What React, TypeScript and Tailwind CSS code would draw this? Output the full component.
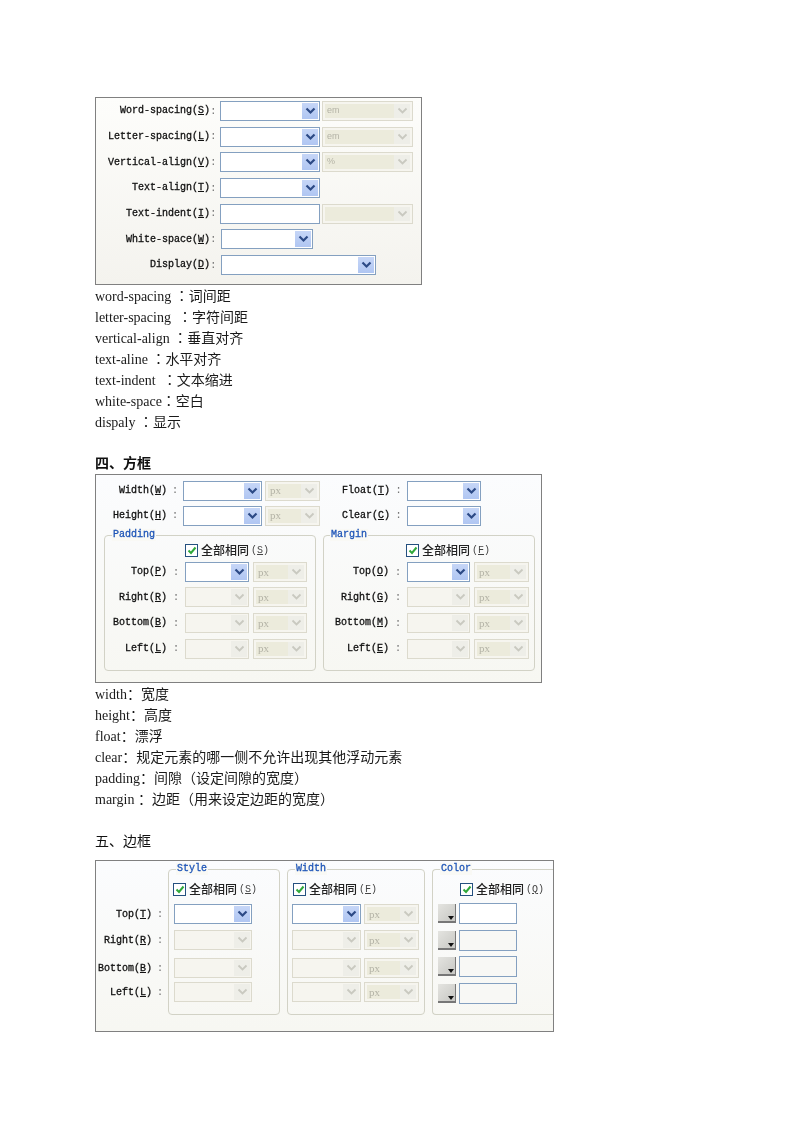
import React from "react";

const mono = "font-['Liberation_Mono','DejaVu_Sans_Mono',monospace]";

function Chevron({ off }: { off?: boolean }) {
  return (
    <svg width="11" height="8" viewBox="0 0 11 8" fill="none">
      <path d="M1.5 1.5 L5.5 5.5 L9.5 1.5" stroke={off ? "#c9c9c0" : "#2c4a86"} strokeWidth={off ? 1.8 : 2.2} />
    </svg>
  );
}

function Arrow({ off }: { off?: boolean }) {
  return (
    <div
      className={`flex h-full w-[16px] shrink-0 items-center justify-center ${
        off ? "bg-[#eeeee8]" : "bg-gradient-to-b from-[#c6d6f7] to-[#b0c6f2]"
      }`}
    >
      <Chevron off={off} />
    </div>
  );
}

function Select({ w, off }: { w: string; off?: boolean }) {
  return (
    <div
      className={`flex h-[20px] shrink-0 justify-end border p-px ${w} ${
        off ? "border-[#dcdacd] bg-[#f6f5ef]" : "border-[#84a0c0] bg-white"
      }`}
    >
      <Arrow off={off} />
    </div>
  );
}

function Unit({ w, text, sans }: { w: string; text?: string; sans?: boolean }) {
  return (
    <div className={`flex h-[20px] shrink-0 border border-[#dcdacd] bg-[#f6f5ef] p-[2px] ${w}`}>
      <div
        className={`flex flex-1 items-center bg-[#ecebdc] pl-[2px] text-[#b4b3a6] ${
          sans ? "font-['Liberation_Sans',sans-serif] text-[9px]" : "font-['Liberation_Serif',serif] text-[11px]"
        }`}
      >
        {text}
      </div>
      <Arrow off />
    </div>
  );
}

function Label({ name, k, w }: { name: string; k: string; w: string }) {
  return (
    <div className={`shrink-0 whitespace-nowrap text-right text-[10px] text-[#111] [-webkit-text-stroke:0.3px_#111] ${mono} ${w}`}>
      {name}(<span className="underline">{k}</span>)
    </div>
  );
}

function Colon({ w }: { w: string }) {
  return <div className={`shrink-0 text-center text-[11px] text-[#777] ${mono} ${w}`}>:</div>;
}

function Check({ k, cls }: { k: string; cls: string }) {
  return (
    <div className={`flex h-[14px] items-center ${cls}`}>
      <div className="flex h-[13px] w-[13px] items-center justify-center border border-[#24507f] bg-white">
        <svg width="10" height="9" viewBox="0 0 10 9" fill="none">
          <path d="M1.5 4.5 L4 7 L8.5 1.5" stroke="#2fa83a" strokeWidth="2" />
        </svg>
      </div>
      <span className="ml-[3px] whitespace-nowrap font-['Noto_Sans_CJK_SC',sans-serif] text-[12px] font-medium leading-none text-[#222]">
        全部相同
      </span>
      <span className={`ml-[2px] text-[10px] text-[#444] ${mono}`}>
        (<span className="underline">{k}</span>)
      </span>
    </div>
  );
}

function Legend({ text, cls }: { text: string; cls: string }) {
  return (
    <span
      className={`absolute top-[-7px] bg-[#f9f9f5] px-[1px] text-[10px] leading-[12px] text-[#1f56b8] [-webkit-text-stroke:0.3px_#1f56b8] ${mono} ${cls}`}
    >
      {text}
    </span>
  );
}

const rows1 = [
  { n: "Word-spacing", k: "S", s: "w-[100px]", u: "em", uw: "w-[91px]", ml: "ml-[5px]" },
  { n: "Letter-spacing", k: "L", s: "w-[100px]", u: "em", uw: "w-[91px]", ml: "ml-[5px]" },
  { n: "Vertical-align", k: "V", s: "w-[100px]", u: "%", uw: "w-[91px]", ml: "ml-[5px]" },
  { n: "Text-align", k: "T", s: "w-[100px]", ml: "ml-[5px]" },
  { n: "Text-indent", k: "I", s: "", input: true, u: "", uw: "w-[91px]", ml: "ml-[5px]" },
  { n: "White-space", k: "W", s: "w-[92px]", ml: "ml-[6px]" },
  { n: "Display", k: "D", s: "w-[155px]", ml: "ml-[6px]" },
];

function Panel1() {
  return (
    <div className="h-[188px] w-[327px] border border-[#808080] bg-gradient-to-b from-[#fdfdfb] to-[#f4f3ee]">
      {rows1.map((r) => (
        <div key={r.n} className="flex h-[25.7px] items-center">
          <Label name={r.n} k={r.k} w="w-[114px]" />
          <Colon w="w-[5px]" />
          <div className={`flex gap-[2px] ${r.ml}`}>
            {r.input ? (
              <div className="h-[20px] w-[100px] border border-[#84a0c0] bg-white" />
            ) : (
              <Select w={r.s} />
            )}
            {r.uw && <Unit w={r.uw} text={r.u} sans />}
          </div>
        </div>
      ))}
    </div>
  );
}

function BoxRow({ name, k, w1, w2, s, u, off }: { name: string; k: string; w1: string; w2: string; s: string; u: string; off?: boolean }) {
  return (
    <div className="flex h-[25.6px] items-center">
      <Label name={name} k={k} w={w1} />
      <Colon w={w2} />
      <div className="flex gap-[4px]">
        <Select w={s} off={off} />
        <Unit w={u} text="px" />
      </div>
    </div>
  );
}

function TopRow({ name, k, unit, w, c, s }: { name: string; k: string; unit?: boolean; w: string; c: string; s: string }) {
  return (
    <div className="flex h-[25px] items-center">
      <Label name={name} k={k} w={w} />
      <Colon w={c} />
      <div className="flex gap-[3px]">
        <Select w={s} />
        {unit && <Unit w="w-[55px]" text="px" />}
      </div>
    </div>
  );
}

function BoxGroup({ title, ck, labels, w1, w2, s, u, cls, lcls, ckcls }: {
  title: string; ck: string; labels: [string, string][]; w1: string; w2: string; s: string; u: string; cls: string; lcls: string; ckcls: string;
}) {
  return (
    <div className={`relative h-[136px] rounded-[4px] border border-[#d2d2c6] ${cls}`}>
      <Legend text={title} cls={lcls} />
      <Check k={ck} cls={`mt-[7px] ${ckcls}`} />
      <div className="mt-[2px]">
        {labels.map(([n, k], i) => (
          <BoxRow key={n} name={n} k={k} w1={w1} w2={w2} s={s} u={u} off={i > 0} />
        ))}
      </div>
    </div>
  );
}

function Panel2() {
  return (
    <div className="flex h-[209px] w-[447px] flex-col border border-[#808080] bg-gradient-to-b from-[#fbfcfe] to-[#f7f7f2]">
      <div className="mt-[3px] flex">
        <div className="w-[225px]">
          <TopRow name="Width" k="W" unit w="w-[71px]" c="w-[16px]" s="w-[79px]" />
          <TopRow name="Height" k="H" unit w="w-[71px]" c="w-[16px]" s="w-[79px]" />
        </div>
        <div>
          <TopRow name="Float" k="T" w="w-[69px]" c="w-[17px]" s="w-[74px]" />
          <TopRow name="Clear" k="C" w="w-[69px]" c="w-[17px]" s="w-[74px]" />
        </div>
      </div>
      <div className="ml-[8px] mt-[7px] flex gap-[7px]">
        <BoxGroup
          title="Padding" ck="S" cls="w-[212px]" lcls="left-[7px]" ckcls="ml-[80px]"
          labels={[["Top", "P"], ["Right", "R"], ["Bottom", "B"], ["Left", "L"]]}
          w1="w-[62px]" w2="w-[18px]" s="w-[64px]" u="w-[54px]"
        />
        <BoxGroup
          title="Margin" ck="F" cls="w-[212px]" lcls="left-[6px]" ckcls="ml-[82px]"
          labels={[["Top", "O"], ["Right", "G"], ["Bottom", "M"], ["Left", "E"]]}
          w1="w-[65px]" w2="w-[18px]" s="w-[63px]" u="w-[55px]"
        />
      </div>
    </div>
  );
}

const gaps = ["", "mt-[6px]", "mt-[8px]", "mt-[4px]"];

function Swatch() {
  return (
    <div className="relative h-[19px] w-[18px] shrink-0 border-b-2 border-r border-[#777] bg-gradient-to-br from-[#e4e4e0] to-[#c8c8c4]">
      <svg className="absolute bottom-[1px] right-[1px]" width="6" height="4" viewBox="0 0 6 4">
        <path d="M0 0 H6 L3 4 Z" fill="#111" />
      </svg>
    </div>
  );
}

function Panel3() {
  const names: [string, string][] = [["Top", "T"], ["Right", "R"], ["Bottom", "B"], ["Left", "L"]];
  return (
    <div className="flex h-[172px] w-[459px] border border-[#808080] bg-gradient-to-b from-[#fbfcfe] to-[#f7f7f2] pt-[8px]">
      <div className="w-[72px] pt-[35px]">
        {names.map(([n, k], i) => (
          <div key={n} className={`flex h-[20px] items-center ${gaps[i]}`}>
            <Label name={n} k={k} w="w-[56px]" />
            <Colon w="w-[16px]" />
          </div>
        ))}
      </div>
      <div className="relative h-[146px] w-[112px] rounded-[4px] border border-[#d2d2c6]">
        <Legend text="Style" cls="left-[7px]" />
        <Check k="S" cls="ml-[4px] mt-[12px]" />
        <div className="ml-[5px] mt-[8px]">
          {[0, 1, 2, 3].map((i) => (
            <div key={i} className={gaps[i]}>
              <Select w="w-[78px]" off={i > 0} />
            </div>
          ))}
        </div>
      </div>
      <div className="relative ml-[7px] h-[146px] w-[138px] rounded-[4px] border border-[#d2d2c6]">
        <Legend text="Width" cls="left-[7px]" />
        <Check k="F" cls="ml-[5px] mt-[12px]" />
        <div className="ml-[4px] mt-[8px]">
          {[0, 1, 2, 3].map((i) => (
            <div key={i} className={`flex gap-[3px] ${gaps[i]}`}>
              <Select w="w-[69px]" off={i > 0} />
              <Unit w="w-[55px]" text="px" />
            </div>
          ))}
        </div>
      </div>
      <div className="relative ml-[7px] h-[146px] flex-1 rounded-l-[4px] border-y border-l border-[#d2d2c6]">
        <Legend text="Color" cls="left-[7px]" />
        <Check k="Q" cls="ml-[27px] mt-[12px]" />
        <div className="ml-[5px] mt-[7px]">
          {[0, 1, 2, 3].map((i) => (
            <div key={i} className={`flex items-center gap-[3px] ${i === 0 ? "" : i === 2 ? "mt-[5px]" : "mt-[6px]"}`}>
              <Swatch />
              <div className={`h-[21px] w-[58px] border border-[#84a0c0] ${i === 0 ? "bg-white" : "bg-[#f8f8f5]"}`} />
            </div>
          ))}
        </div>
      </div>
    </div>
  );
}

const cjk = "font-['Liberation_Serif','Noto_Sans_CJK_SC',serif]";

function Lines({ items, center }: { items: string[]; center?: boolean }) {
  return (
    <div className={`text-[14px] text-[#1a1a1a] ${cjk}`}>
      {items.map((t) => {
        const [a, b] = t.split("：");
        return (
          <div key={t} className="h-[21px] overflow-hidden whitespace-pre leading-[21px]">
            {a}
            <span className={center ? "font-['Noto_Sans_CJK_TC',sans-serif] leading-none" : "leading-none"}>：</span>
            <span className="leading-none">{b}</span>
          </div>
        );
      })}
    </div>
  );
}

export default function App() {
  return (
    <div className="h-[1132px] w-[800px] bg-white pl-[95px] pt-[97px] blur-[0.3px]">
      <Panel1 />
      <div className="mt-[1px]">
        <Lines
          center
          items={[
            "word-spacing ：词间距",
            "letter-spacing  ：字符间距",
            "vertical-align ：垂直对齐",
            "text-aline ：水平对齐",
            "text-indent  ：文本缩进",
            "white-space：空白",
            "dispaly ：显示",
          ]}
        />
      </div>
      <div className={`mt-[20px] h-[21px] text-[14px] font-bold leading-[21px] text-[#111] ${cjk}`}>四、方框</div>
      <Panel2 />
      <div className="mt-[1px]">
        <Lines
          items={[
            "width：宽度",
            "height：高度",
            "float：漂浮",
            "clear：规定元素的哪一侧不允许出现其他浮动元素",
            "padding：间隙（设定间隙的宽度）",
            "margin ：边距（用来设定边距的宽度）",
          ]}
        />
      </div>
      <div className={`mt-[21px] h-[20px] text-[14px] leading-[21px] text-[#111] ${cjk}`}>五、边框</div>
      <div className="mt-[9px]">
        <Panel3 />
      </div>
    </div>
  );
}
